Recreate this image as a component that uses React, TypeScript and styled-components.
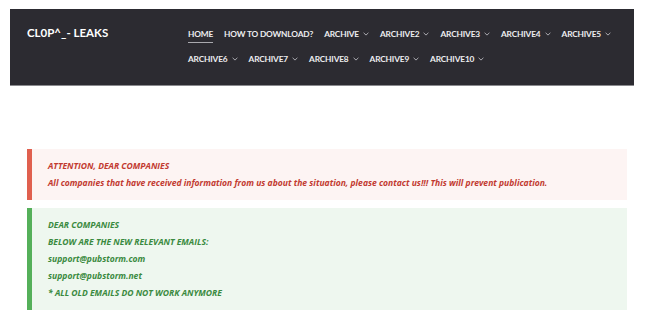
import styled, { createGlobalStyle } from "styled-components";

const GlobalStyle = createGlobalStyle`
  html, body {
    margin: 0;
    padding: 0;
    background: #ffffff;
  }
  body {
    font-family: Lato, "Open Sans", sans-serif;
  }
`;

const topMenu = ["HOME", "HOW TO DOWNLOAD?"];
const archives = [
  "ARCHIVE",
  "ARCHIVE2",
  "ARCHIVE3",
  "ARCHIVE4",
  "ARCHIVE5",
  "ARCHIVE6",
  "ARCHIVE7",
  "ARCHIVE8",
  "ARCHIVE9",
  "ARCHIVE10",
];

function Chevron() {
  return (
    <svg width="6" height="4" viewBox="0 0 6 4" fill="none">
      <path d="M0.6 0.8 L3 3.1 L5.4 0.8" stroke="#b9b9be" strokeWidth="0.9" />
    </svg>
  );
}

export default function App() {
  return (
    <>
      <GlobalStyle />
      <Page>
        <Header>
          <Logo>CL0P^_- LEAKS</Logo>
          <Nav>
            {topMenu.map((item) => (
              <NavItem key={item} $active={item === "HOME"}>
                {item}
              </NavItem>
            ))}
            {archives.map((item) => (
              <NavItem key={item}>
                {item}
                <Chevron />
              </NavItem>
            ))}
          </Nav>
        </Header>

        <Content>
          <Notice $tone="red">
            <Line>ATTENTION, DEAR COMPANIES</Line>
            <Line>
              All companies that have received information from us about the
              situation, please contact us!!! This will prevent publication.
            </Line>
          </Notice>
          <Notice $tone="green">
            <Line>DEAR COMPANIES</Line>
            <Line>BELOW ARE THE NEW RELEVANT EMAILS:</Line>
            <Line>support@pubstorm.com</Line>
            <Line>support@pubstorm.net</Line>
            <Line>* ALL OLD EMAILS DO NOT WORK ANYMORE</Line>
          </Notice>
        </Content>
      </Page>
    </>
  );
}

const tones = {
  red: { border: "#e0604f", bg: "#fdf4f3", text: "#c23a30" },
  green: { border: "#55b05a", bg: "#eef7ef", text: "#3a8a40" },
};

const Page = styled.div`
  padding: 9px 13px 0 10px;
`;

const Header = styled.header`
  display: flex;
  align-items: flex-start;
  height: 76px;
  background: #2c2b31;
  border-bottom: 1px solid #8a8a8e;
  padding: 0 10px 0 17px;
`;

const Logo = styled.div`
  width: 161px;
  flex-shrink: 0;
  padding-top: 17px;
  color: #ffffff;
  font-family: Lato, sans-serif;
  font-weight: 700;
  font-size: 11.5px;
  line-height: 14px;
`;

const Nav = styled.nav`
  display: flex;
  flex-wrap: wrap;
  column-gap: 11px;
  padding-top: 17px;
`;

const NavItem = styled.a<{ $active?: boolean }>`
  display: inline-flex;
  align-items: center;
  gap: 4px;
  height: 25px;
  box-sizing: border-box;
  padding-bottom: 9px;
  color: #eeeef0;
  font-family: Lato, sans-serif;
  font-weight: 700;
  font-size: 8.3px;
  letter-spacing: -0.15px;
  white-space: nowrap;
  position: relative;

  ${({ $active }) =>
    $active &&
    `
    &::after {
      content: "";
      position: absolute;
      left: 0;
      right: 0;
      top: 16px;
      height: 1px;
      background: #a9a9ae;
    }
  `}
`;

const Content = styled.main`
  display: flex;
  flex-direction: column;
  gap: 8px;
  width: 600px;
  margin: 63px 0 0 17px;
`;

const Notice = styled.div<{ $tone: "red" | "green" }>`
  border-left: 5px solid ${({ $tone }) => tones[$tone].border};
  background: ${({ $tone }) => tones[$tone].bg};
  color: ${({ $tone }) => tones[$tone].text};
  padding: 9px 16px 8px 16px;
`;

const Line = styled.p`
  margin: 0;
  font-family: "Open Sans", Lato, sans-serif;
  font-style: italic;
  font-weight: 700;
  font-size: 8.55px;
  line-height: 17px;
`;
